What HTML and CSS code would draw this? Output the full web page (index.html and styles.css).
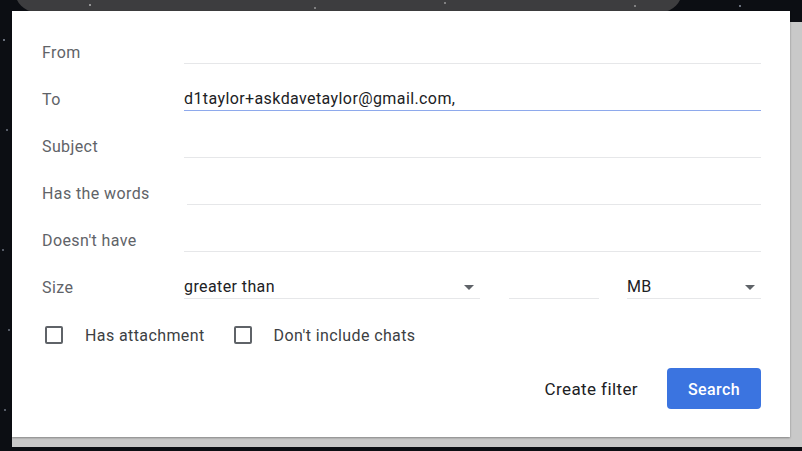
FILE: index.html
```html
<!DOCTYPE html>
<html lang="en">
<head>
<meta charset="utf-8">
<title>Search options</title>
<link rel="stylesheet" href="styles.css">
</head>
<body>
<div class="desktop">
  <div class="searchbar"></div>
  <div class="backdrop"></div>
  <form class="panel">
    <div class="row"><span class="label">From</span><div class="field"></div></div>
    <div class="row"><span class="label">To</span><div class="field active">d1taylor+askdavetaylor@gmail.com,</div></div>
    <div class="row"><span class="label">Subject</span><div class="field"></div></div>
    <div class="row"><span class="label">Has the words</span><div class="field shifted"></div></div>
    <div class="row"><span class="label">Doesn't have</span><div class="field"></div></div>
    <div class="row"><span class="label">Size</span>
      <div class="size-fields">
        <div class="field select"><span>greater than</span><span class="arrow"></span></div>
        <div class="field"></div>
        <div class="field select"><span>MB</span><span class="arrow"></span></div>
      </div>
    </div>
    <div class="checks">
      <label class="check"><span class="box"></span><span>Has attachment</span></label>
      <label class="check"><span class="box"></span><span>Don't include chats</span></label>
    </div>
    <div class="actions">
      <span class="link">Create filter</span>
      <span class="primary">Search</span>
    </div>
  </form>
</div>
</body>
</html>
```
FILE: styles.css
```css
html, body {
  margin: 0;
  padding: 0;
}
body {
  width: 802px;
  height: 451px;
  overflow: hidden;
  font-family: Roboto, "Liberation Sans", sans-serif;
  letter-spacing: 0.4px;
  background-color: #0c0e13;
  background-image:
    radial-gradient(circle at 4px 40px, rgba(200,210,230,.5) 0.7px, transparent 1.3px),
    radial-gradient(circle at 7px 130px, rgba(200,210,230,.4) 0.7px, transparent 1.3px),
    radial-gradient(circle at 3px 250px, rgba(200,210,230,.4) 0.7px, transparent 1.3px),
    radial-gradient(circle at 9px 330px, rgba(200,210,230,.4) 0.7px, transparent 1.3px),
    radial-gradient(circle at 5px 410px, rgba(200,210,230,.4) 0.7px, transparent 1.3px),
    radial-gradient(circle at 740px 6px, rgba(200,210,230,.5) 0.7px, transparent 1.3px),
    radial-gradient(circle at 780px 14px, rgba(200,210,230,.4) 0.7px, transparent 1.3px);
}
.desktop {
  position: relative;
  width: 802px;
  height: 451px;
}
.searchbar {
  position: absolute;
  left: 15px;
  top: -30px;
  width: 667px;
  height: 42px;
  border-radius: 22px;
  background-color: #3d3d3f;
  background-image:
    radial-gradient(circle at 75px 35px, rgba(255,255,255,.45) 0.7px, transparent 1.3px),
    radial-gradient(circle at 300px 38px, rgba(255,255,255,.35) 0.7px, transparent 1.3px),
    radial-gradient(circle at 430px 33px, rgba(255,255,255,.35) 0.7px, transparent 1.3px),
    radial-gradient(circle at 620px 36px, rgba(255,255,255,.35) 0.7px, transparent 1.3px);
}
.backdrop {
  position: absolute;
  left: 12px;
  top: 22px;
  right: 0;
  height: 425px;
  background: #c9c9c9;
}
.panel {
  position: absolute;
  left: 12px;
  top: 11px;
  width: 778px;
  height: 426px;
  box-sizing: border-box;
  margin: 0;
  padding: 18px 29px 0 30px;
  background: #ffffff;
  box-shadow: 0 1px 2px rgba(0,0,0,.35);
  display: flex;
  flex-direction: column;
}
.row {
  display: grid;
  grid-template-columns: 142px 1fr;
  align-items: center;
  height: 47px;
}
.label {
  font-size: 16px;
  color: #5f6368;
  line-height: 20px;
}
.field {
  height: 23px;
  box-sizing: border-box;
  border-bottom: 1px solid #e6e7e9;
  font-size: 16px;
  line-height: 22px;
  color: #202124;
}
.field.active {
  border-bottom-color: #8ea9ec;
}
.field.shifted {
  margin-left: 3px;
}
.size-fields {
  display: grid;
  grid-template-columns: 296px 90px 134px;
  justify-content: space-between;
  align-items: center;
}
.select {
  display: flex;
  align-items: center;
  justify-content: space-between;
  padding-right: 6px;
}
.arrow {
  width: 0;
  height: 0;
  border-left: 5px solid transparent;
  border-right: 5px solid transparent;
  border-top: 5px solid #5f6368;
}
.checks {
  display: flex;
  align-items: center;
  box-sizing: border-box;
  height: 47px;
  padding: 1px 0 0 3px;
  gap: 29px;
}
.check {
  display: flex;
  align-items: center;
  gap: 22px;
  font-size: 16px;
  color: #3c4043;
}
.box {
  width: 18px;
  height: 18px;
  box-sizing: border-box;
  border: 2px solid #5f6368;
  border-radius: 2px;
}
.actions {
  display: flex;
  justify-content: flex-end;
  align-items: center;
  height: 41px;
  margin-top: 10px;
  gap: 29px;
}
.link {
  font-size: 17px;
  line-height: 20px;
  color: #202124;
}
.primary {
  width: 94px;
  height: 41px;
  box-sizing: border-box;
  padding-top: 1px;
  border-radius: 4px;
  background: #3b74e0;
  color: #ffffff;
  font-size: 16px;
  font-weight: 500;
  display: flex;
  align-items: center;
  justify-content: center;
}
```
